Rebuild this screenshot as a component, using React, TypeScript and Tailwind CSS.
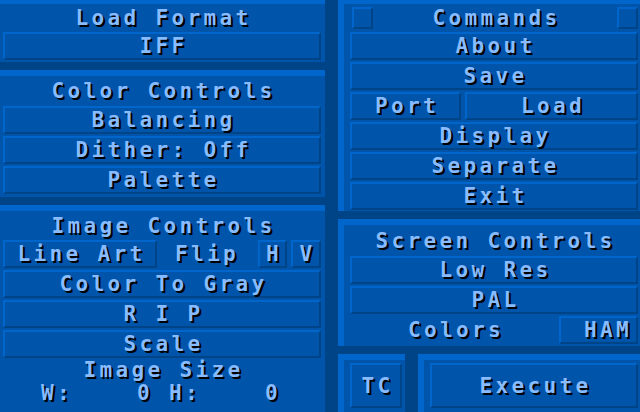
import type { ReactNode } from 'react';

const LIGHT = 'border-t-[#0066cc] border-l-[#0066cc]';
const DARK = 'border-b-[#004488] border-r-[#004488]';

function Label({ children, className = '' }: { children: ReactNode; className?: string }) {
  return (
    <span
      className={`whitespace-pre pl-[3px] font-['DejaVu_Sans_Mono',monospace] text-[21px] font-bold leading-[16px] tracking-[3.36px] text-[#88bbff] [text-shadow:2px_2px_0_#000] ${className}`}
    >
      {children}
    </span>
  );
}

function Btn({ children, className = '' }: { children?: ReactNode; className?: string }) {
  return (
    <div
      className={`flex h-[28px] items-center justify-center border-2 ${LIGHT} ${DARK} bg-[#0055aa] ${className}`}
    >
      {children && <Label>{children}</Label>}
    </div>
  );
}

export default function App() {
  return (
    <div className="flex h-[412px] w-[640px] overflow-hidden bg-[#004488]">
      {/* colonne gauche */}
      <div className="flex w-[332px] flex-col">
        <div className="flex h-[62px] w-[325px] flex-col border-t-4 border-t-[#0066cc] bg-[#0055aa] pl-[3px] pr-[4px]">
          <div className="flex h-[28px] items-center justify-center">
            <Label>Load Format</Label>
          </div>
          <Btn>IFF</Btn>
        </div>

        <div className="mt-[8px] flex h-[127px] w-[325px] flex-col gap-[2px] border-t-[6px] border-t-[#0066cc] bg-[#0055aa] pl-[3px] pr-[4px]">
          <div className="-mb-[2px] flex h-[30px] items-center justify-center">
            <Label>Color Controls</Label>
          </div>
          <Btn>Balancing</Btn>
          <Btn>Dither: Off</Btn>
          <Btn>Palette</Btn>
        </div>

        <div className="mt-[8px] flex flex-1 w-[325px] flex-col gap-[2px] border-t-[6px] border-t-[#0066cc] bg-[#0055aa] pl-[3px] pr-[4px]">
          <div className="-mb-[2px] flex h-[29px] items-center justify-center">
            <Label>Image Controls</Label>
          </div>
          <div className="flex h-[28px] items-center">
            <Btn className="w-[154px]">Line Art</Btn>
            <div className="flex flex-1 items-center justify-center pr-[4px]">
              <Label>Flip</Label>
            </div>
            <Btn className="w-[29px]">H</Btn>
            <Btn className="ml-[4px] w-[30px]">V</Btn>
          </div>
          <Btn>Color To Gray</Btn>
          <Btn>R I P</Btn>
          <Btn>Scale</Btn>
          <div className="-mt-[2px] flex h-[23px] items-center justify-center">
            <Label>Image Size</Label>
          </div>
          <div className="-mt-[2px] flex h-[24px] items-center pl-[35px]">
            <Label>{'W:    0 H:    0'}</Label>
          </div>
        </div>
      </div>

      {/* colonne droite */}
      <div className="flex flex-1 flex-col pl-[6px]">
        <div className="flex h-[211px] flex-col gap-[2px] border-l-[6px] border-t-4 border-l-[#0066cc] border-t-[#0066cc] bg-[#0055aa] pl-[6px] pr-[2px]">
          <div className="-mb-[2px] flex h-[28px] items-center justify-between">
            <div className={`ml-[2px] h-[22px] w-[21px] border-2 ${LIGHT} ${DARK} bg-[#0055aa]`} />
            <Label>Commands</Label>
            <div className={`h-[22px] w-[21px] border-2 ${LIGHT} ${DARK} bg-[#0055aa]`} />
          </div>
          <Btn>About</Btn>
          <Btn>Save</Btn>
          <div className="flex gap-[4px]">
            <Btn className="w-[111px]">Port</Btn>
            <Btn className="flex-1">Load</Btn>
          </div>
          <Btn>Display</Btn>
          <Btn>Separate</Btn>
          <Btn>Exit</Btn>
        </div>

        <div className="mt-[8px] flex h-[127px] flex-col gap-[2px] border-l-[6px] border-t-[6px] border-l-[#0066cc] border-t-[#0066cc] bg-[#0055aa] pl-[6px] pr-[2px]">
          <div className="-mb-[2px] flex h-[31px] items-center justify-center">
            <Label>Screen Controls</Label>
          </div>
          <Btn>Low Res</Btn>
          <Btn>PAL</Btn>
          <div className="flex h-[28px] items-center">
            <div className="flex flex-1 items-center justify-center">
              <Label>Colors</Label>
            </div>
            <Btn className="w-[79px] !justify-end pr-[4px]">HAM</Btn>
          </div>
        </div>

        <div className="mt-[8px] flex flex-1">
          <div className="flex w-[67px] border-l-[6px] border-t-[6px] border-l-[#0066cc] border-t-[#0066cc] bg-[#0055aa] pl-[6px] pt-[3px]">
            <Btn className="h-[45px] w-[52px]">TC</Btn>
          </div>
          <div className="ml-[13px] flex flex-1 border-l-[6px] border-t-[6px] border-l-[#0066cc] border-t-[#0066cc] bg-[#0055aa] pl-[6px] pr-[2px] pt-[3px]">
            <Btn className="h-[45px] flex-1">Execute</Btn>
          </div>
        </div>
      </div>
    </div>
  );
}
